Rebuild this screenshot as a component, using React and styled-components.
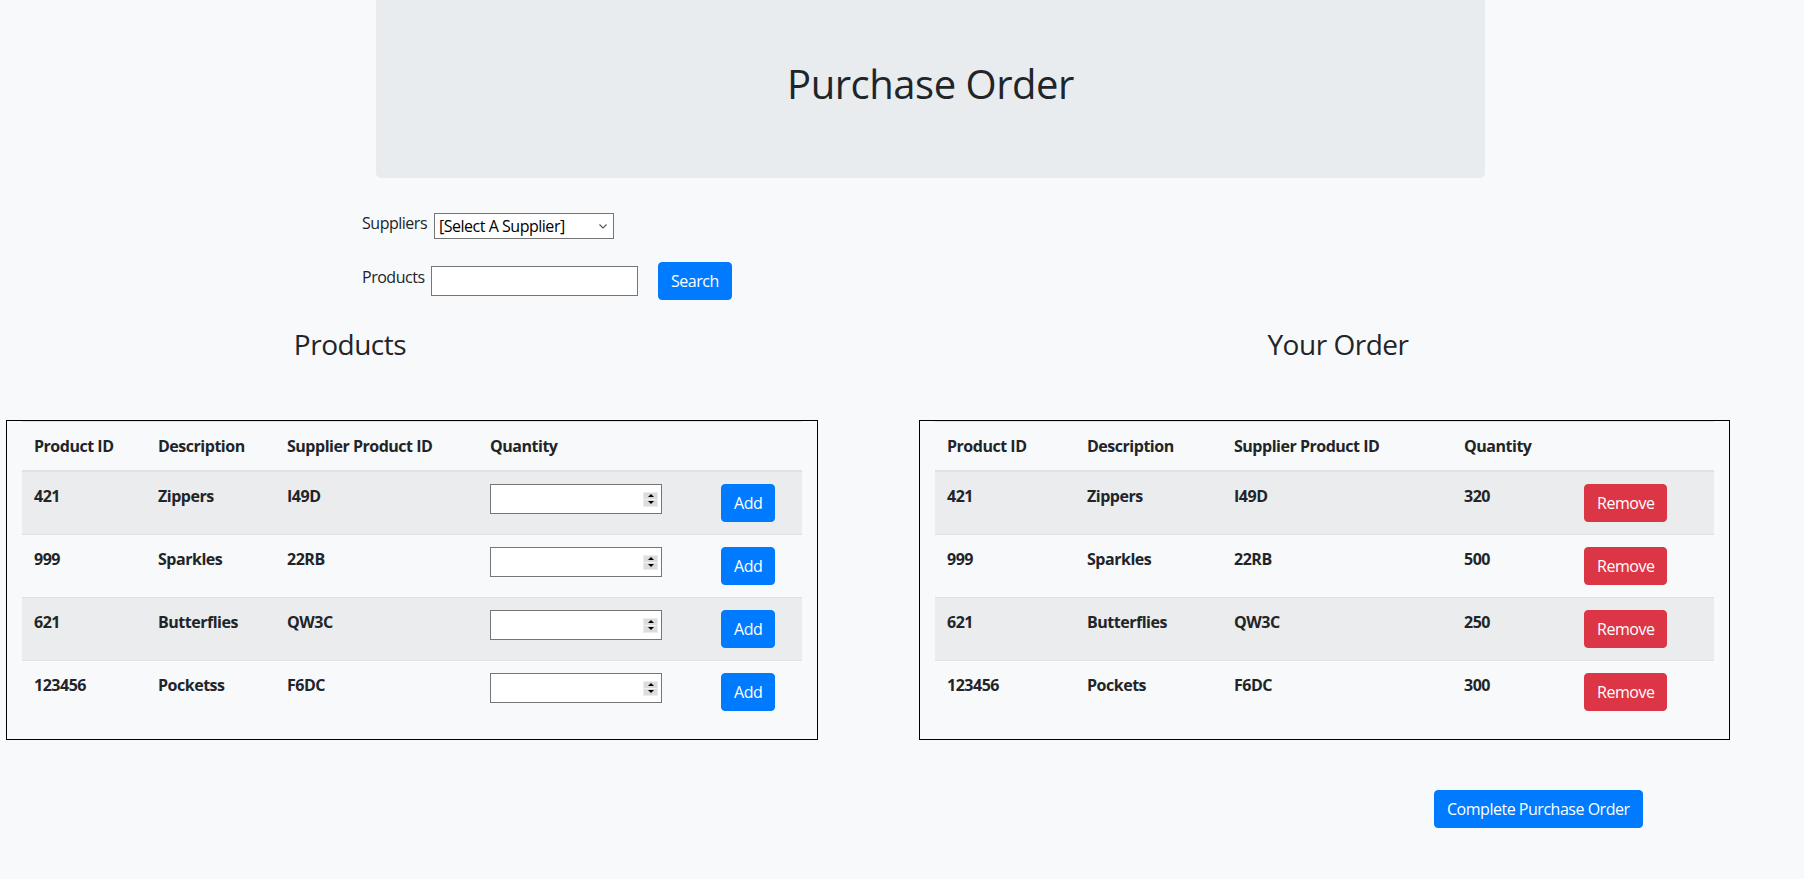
import React from "react";
import styled, { createGlobalStyle } from "styled-components";

const GlobalStyle = createGlobalStyle`
  body {
    margin: 0;
    background: #f8f9fa;
    color: #212529;
    font-family: "Segoe UI", "Open Sans", "Noto Sans", sans-serif;
    font-size: 16px;
    line-height: 1.5;
    letter-spacing: -0.03em;
  }
  * { box-sizing: border-box; }
`;

const Page = styled.div`
  width: 1804px;
  padding-bottom: 40px;
`;

const Jumbotron = styled.div`
  margin-left: 376px;
  width: 1109px;
  height: 178px;
  padding-top: 60px;
  background: #e9ecef;
  border-radius: 0 0 5px 5px;
  text-align: center;
`;

const Title = styled.h1`
  margin: 0;
  font-size: 40px;
  font-weight: 400;
  line-height: 48px;
`;

const Form = styled.div`
  margin-left: 362px;
`;

const FormRow = styled.div`
  display: flex;
  align-items: flex-start;
  margin-top: ${p => p.$top}px;
`;

const Label = styled.label`
  width: ${p => p.$w}px;
  margin-top: ${p => p.$top || 0}px;
  line-height: 24px;
`;

const SelectBox = styled.div`
  display: flex;
  align-items: center;
  width: 180px;
  height: 26px;
  margin-top: 2px;
  padding: 0 6px 0 4px;
  border: 1px solid #767676;
  background: #fff;
`;

const Select = styled.select`
  appearance: none;
  flex: 1;
  min-width: 0;
  border: none;
  background: transparent;
  padding: 0;
  font: inherit;
  letter-spacing: inherit;
  color: #000;
  line-height: 22px;
  outline: none;
`;

const TextInput = styled.input`
  width: ${p => p.$w}px;
  height: 30px;
  margin-top: ${p => p.$top || 0}px;
  border: 1px solid #767676;
  background: #fff;
  padding: 1px 2px;
  font: inherit;
  outline: none;
`;

const Button = styled.button`
  padding: 6px 12px;
  margin-left: ${p => p.$ml || 0}px;
  font-family: inherit;
  font-size: 16px;
  font-weight: 400;
  letter-spacing: inherit;
  line-height: 24px;
  color: #fff;
  background: ${p => (p.$danger ? "#dc3545" : "#007bff")};
  border: 1px solid ${p => (p.$danger ? "#dc3545" : "#007bff")};
  border-radius: 4px;
  white-space: nowrap;
  cursor: pointer;
`;

const Columns = styled.div`
  display: flex;
  margin-top: 27px;
`;

const Column = styled.div`
  width: ${p => p.$w}px;
  margin-left: ${p => p.$ml}px;
`;

const Heading = styled.h3`
  margin: 0 0 59px;
  padding: ${p => p.$pad};
  font-size: 28px;
  font-weight: 400;
  line-height: 34px;
  text-align: center;
`;

const TableBox = styled.div`
  border: 1px solid #000;
  padding: 0 15px;
`;

const Table = styled.table`
  width: 100%;
  table-layout: fixed;
  border-collapse: collapse;
  margin-bottom: 16px;

  tbody tr:nth-of-type(odd) {
    background: rgba(0, 0, 0, 0.05);
  }
`;

const Col = styled.col`
  width: ${p => p.$w}px;
`;

const Th = styled.th`
  padding: 12px;
  text-align: left;
  font-weight: 700;
  line-height: 24px;
  vertical-align: bottom;
  border-top: 1px solid #dee2e6;
  border-bottom: 2px solid #dee2e6;
  white-space: nowrap;
`;

const Td = styled.td`
  padding: 12px;
  font-weight: 700;
  line-height: 24px;
  vertical-align: top;
  border-top: 1px solid #dee2e6;
  white-space: nowrap;
`;

const NumberBox = styled.div`
  display: flex;
  align-items: center;
  width: 172px;
  height: 30px;
  padding-right: 3px;
  border: 1px solid #767676;
  background: #fff;
`;

const NumberField = styled.input`
  flex: 1;
  min-width: 0;
  height: 100%;
  border: none;
  background: transparent;
  padding: 1px 2px;
  font: inherit;
  outline: none;
`;

const Spinner = styled.div`
  display: flex;
  flex-direction: column;
  width: 15px;
  height: 15px;
  background: #dcdcdc;
  border: 1px solid #ececec;
`;

const SpinHalf = styled.div`
  flex: 1;
  display: flex;
  align-items: center;
  justify-content: center;
  border-top: ${p => (p.$down ? "1px solid #f4f4f4" : "none")};

  &::after {
    content: "";
    border-left: 3px solid transparent;
    border-right: 3px solid transparent;
    ${p => (p.$down ? "border-top: 3px solid #000;" : "border-bottom: 3px solid #000;")}
  }
`;

const ActionRow = styled.div`
  margin-top: 50px;
  padding-left: 515px;
`;

const products = [
  { id: "421", desc: "Zippers", sku: "I49D" },
  { id: "999", desc: "Sparkles", sku: "22RB" },
  { id: "621", desc: "Butterflies", sku: "QW3C" },
  { id: "123456", desc: "Pocketss", sku: "F6DC" },
];

const order = [
  { id: "421", desc: "Zippers", sku: "I49D", qty: 320 },
  { id: "999", desc: "Sparkles", sku: "22RB", qty: 500 },
  { id: "621", desc: "Butterflies", sku: "QW3C", qty: 250 },
  { id: "123456", desc: "Pockets", sku: "F6DC", qty: 300 },
];

function Chevron() {
  return (
    <svg width="8" height="5" viewBox="0 0 8 5">
      <polyline points="0.5,0.5 4,4 7.5,0.5" fill="none" stroke="#555" strokeWidth="1.1" />
    </svg>
  );
}

function QtyInput() {
  return (
    <NumberBox>
      <NumberField type="text" />
      <Spinner>
        <SpinHalf />
        <SpinHalf $down />
      </Spinner>
    </NumberBox>
  );
}

function Header() {
  return (
    <thead>
      <tr>
        <Th>Product ID</Th>
        <Th>Description</Th>
        <Th>Supplier Product ID</Th>
        <Th>Quantity</Th>
        <Th></Th>
      </tr>
    </thead>
  );
}

export default function App() {
  return (
    <Page>
      <GlobalStyle />
      <Jumbotron>
        <Title>Purchase Order</Title>
      </Jumbotron>

      <Form>
        <FormRow $top={33}>
          <Label $w={72}>Suppliers</Label>
          <SelectBox>
            <Select defaultValue="">
              <option value="">[Select A Supplier]</option>
            </Select>
            <Chevron />
          </SelectBox>
        </FormRow>
        <FormRow $top={23}>
          <Label $w={69} $top={3}>Products</Label>
          <TextInput $w={207} $top={4} />
          <Button $ml={20}>Search</Button>
        </FormRow>
      </Form>

      <Columns>
        <Column $w={812} $ml={6}>
          <Heading $pad="0 124px 0 0">Products</Heading>
          <TableBox>
            <Table>
              <colgroup>
                <Col $w={124} />
                <Col $w={129} />
                <Col $w={203} />
                <Col $w={231} />
                <Col $w={93} />
              </colgroup>
              <Header />
              <tbody>
                {products.map(p => (
                  <tr key={p.id}>
                    <Td>{p.id}</Td>
                    <Td>{p.desc}</Td>
                    <Td>{p.sku}</Td>
                    <Td><QtyInput /></Td>
                    <Td><Button>Add</Button></Td>
                  </tr>
                ))}
              </tbody>
            </Table>
          </TableBox>
        </Column>

        <Column $w={811} $ml={101}>
          <Heading $pad="0 0 0 27px">Your Order</Heading>
          <TableBox>
            <Table>
              <colgroup>
                <Col $w={140} />
                <Col $w={147} />
                <Col $w={230} />
                <Col $w={120} />
                <Col $w={142} />
              </colgroup>
              <Header />
              <tbody>
                {order.map(o => (
                  <tr key={o.id}>
                    <Td>{o.id}</Td>
                    <Td>{o.desc}</Td>
                    <Td>{o.sku}</Td>
                    <Td>{o.qty}</Td>
                    <Td><Button $danger>Remove</Button></Td>
                  </tr>
                ))}
              </tbody>
            </Table>
          </TableBox>
          <ActionRow>
            <Button>Complete Purchase Order</Button>
          </ActionRow>
        </Column>
      </Columns>
    </Page>
  );
}
